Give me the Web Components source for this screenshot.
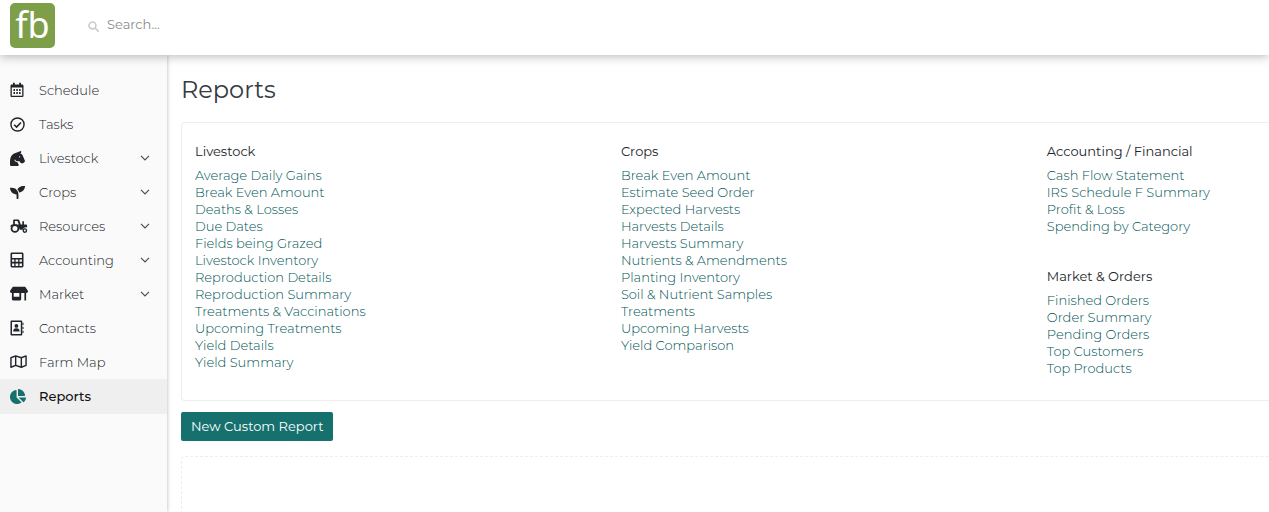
<!DOCTYPE html>
<html lang="en">
<head>
<meta charset="utf-8">
<title>Reports</title>
<style>
  body {
    margin: 0;
    color: #343a40;
    background: #fff;
    font: 13px/17px Montserrat, Inter, "Open Sans", sans-serif;
  }
</style>
</head>
<body>
<farm-app></farm-app>

<script>
/*
 * Icon paths, keyed by name: [viewBox, markup]
 */
const ICONS = {
  search: ["0 0 16 16", `<g fill="none" stroke="currentColor" stroke-width="2.4"><circle cx="6.5" cy="6.5" r="5"/><path d="M10.2 10.2l4.6 4.6" stroke-linecap="round"/></g>`],
  calendar: ["0 0 14 16", `<path fill-rule="evenodd" d="M3 .8h1.800V2.500h4.400V.8H11v1.700h1.200c.8 0 1.300.6 1.300 1.300v10c0 .8-.5 1.300-1.300 1.300H1.800c-.8 0-1.300-.5-1.300-1.300v-10c0-.7.5-1.300 1.300-1.300H3zM1.800 5.500v8.300h10.400V5.500z"/><path d="M3.500 7h1.500v2H3.500zm2.800 0h1.500v2H6.300zm2.800 0h1.500v2H9.100zM3.500 10h1.500v2H3.500zm2.800 0h1.500v2H6.300zm2.800 0h1.500v2H9.100z"/>`],
  tasks: ["0 0 16 16", `<g fill="none" stroke="currentColor" stroke-width="1.5"><circle cx="8" cy="8" r="7"/><path d="M4.500 8.300l2.500 2.500 4.700-4.900" stroke-width="1.700"/></g>`],
  horse: ["0 0 512 512", `<path d="M509.8 332.5l-69.9-164.300c-14.900-41.200-50.400-71-93-79.200 18-10.600 46.300-35.900 34.200-82.300-1.300-5-7.100-7.900-12-6.100L166.900 76.300C35.900 123.400 0 238.900 0 398.800V480c0 17.700 14.300 32 32 32h236.200c23.800 0 39.300-25 28.600-46.300L256 384v-.7c-45.600-3.500-84.600-30.700-104.300-69.600-1.600-3.100-.9-6.900 1.600-9.300l12.100-12.100c3.900-3.900 10.600-2.700 12.900 2.400 14.800 33.700 48.200 57.400 87.400 57.400 17.200 0 33-5.100 46.800-13.200l46 63.900c6 8.400 15.700 13.300 26 13.300h50.300c8.500 0 16.600-3.400 22.600-9.400l45.300-39.800c8.900-9.100 11.700-22.600 7.100-34.400zM328 224c-13.300 0-24-10.700-24-24s10.700-24 24-24 24 10.700 24 24-10.700 24-24 24z"/>`],
  seedling: ["0 0 512 512", `<path d="M64 96H0c0 123.700 100.300 224 224 224v144c0 8.800 7.200 16 16 16h32c8.800 0 16-7.200 16-16V320C288 196.300 187.700 96 64 96zm384-64c-84.200 0-157.400 46.500-195.700 115.200 27.700 30.200 48.200 66.900 59 107.600C424 243.100 512 147.900 512 32h-64z"/>`],
  tractor: ["0 0 20 16", `<path fill-rule="evenodd" d="M3.500 1.500c0-.6.4-1 1-1h4.700c.5 0 .8.300 1 .7L12 6h1.700V2.500h1.800V6h2.300c.7 0 1.200.5 1.200 1.200v2.300c-2-.8-4.300.2-4.900 2.500h-3.300l-1.300-3.500-3-1.700-3.800.7L.5 9V7.500L2 6h1.500zm1.900.8V6h4.500L8.300 2.300z"/><circle cx="5.500" cy="10.500" r="3.800" fill="none" stroke="currentColor" stroke-width="2"/><circle cx="16.500" cy="12.800" r="1.900" fill="none" stroke="currentColor" stroke-width="1.500"/>`],
  calculator: ["0 0 14 16", `<path fill-rule="evenodd" d="M1.900.5h10.200c.8 0 1.400.6 1.400 1.400v12.200c0 .8-.6 1.400-1.400 1.400H1.900c-.8 0-1.400-.6-1.400-1.400V1.900C.5 1.100 1.100.5 1.900.5zM2.100 2v4h9.800V2zm0 5.600v2.200h2.200V7.600zm3.500 0v2.200h2.600V7.600zm3.900 0v2.200h2.400V7.600zm-7.400 3.800v2.500h2.200v-2.500zm3.500 0v2.500h2.600v-2.500zm3.900 0v2.500h2.400v-2.500z"/>`],
  store: ["0 0 19 16", `<path d="M3 .7h13l2.700 4.100c.8 1.300-.2 2.500-1.500 2.500H1.800C.5 7.300-.5 6.100.3 4.800z"/><path fill-rule="evenodd" d="M2 7h1.900v4.400h6V7h1.900v7c0 .7-.5 1.200-1.200 1.200H3.200c-.7 0-1.200-.5-1.200-1.200zM15.200 7H17v8.200h-1.800z"/>`],
  contacts: ["0 0 14 16", `<path fill-rule="evenodd" d="M1.800.5H11c.8 0 1.300.5 1.300 1.300v12.400c0 .8-.5 1.300-1.300 1.300H1.800c-.8 0-1.300-.5-1.300-1.300V1.800C.5 1 1 .5 1.800.5zM2 2v12h8.800V2z"/><circle cx="6.400" cy="5.900" r="1.900"/><path d="M3.200 11.500c0-2 1-3.200 3.200-3.200s3.200 1.200 3.200 3.200zM12.500 2.800h1v2.300h-1zm0 4h1v2.300h-1zm0 4h1v2.300h-1z"/>`],
  map: ["0 0 18 16", `<path d="M1 4l5-2 6 2 5-2v10l-5 2-6-2-5 2zM6 2v10M12 4v10" fill="none" stroke="currentColor" stroke-width="1.500" stroke-linejoin="round"/>`],
  chart: ["0 0 544 512", `<path d="M527.800 288H290.500l158 158c6 6 16 6.500 22.200.7 38.700-36.500 65.300-85.600 73.100-140.900 1.400-9.400-6.500-17.800-16-17.800zm-15.800-64.800C503.700 103.700 408.300 8.300 288.800 0 279.700-.6 272 7.100 272 16.200V240h223.800c9.100 0 16.800-7.700 16.200-16.800zM224 288V50.700c0-9.500-8.400-17.400-17.800-16C87 51.500-4.100 155.600.1 280.400 4.500 408.500 114.800 513.600 243 512c50.400-.6 97-16.900 135.300-44 7.900-5.600 8.400-17.200 1.600-24.100z"/>`],
  chevron: ["0 0 10 6", `<path d="M1 .8l4 4 4-4" fill="none" stroke="currentColor" stroke-width="1.200"/>`]
};

const NAV = [
  ["calendar", "Schedule", 14],
  ["tasks", "Tasks", 15],
  ["horse", "Livestock", 15, true],
  ["seedling", "Crops", 15, true],
  ["tractor", "Resources", 18, true],
  ["calculator", "Accounting", 14, true],
  ["store", "Market", 18, true],
  ["contacts", "Contacts", 14],
  ["map", "Farm Map", 17],
  ["chart", "Reports", 16]
];

const COLUMNS = [
  {
    "Livestock": ["Average Daily Gains", "Break Even Amount", "Deaths & Losses", "Due Dates", "Fields being Grazed", "Livestock Inventory", "Reproduction Details", "Reproduction Summary", "Treatments & Vaccinations", "Upcoming Treatments", "Yield Details", "Yield Summary"]
  },
  {
    "Crops": ["Break Even Amount", "Estimate Seed Order", "Expected Harvests", "Harvests Details", "Harvests Summary", "Nutrients & Amendments", "Planting Inventory", "Soil & Nutrient Samples", "Treatments", "Upcoming Harvests", "Yield Comparison"]
  },
  {
    "Accounting / Financial": ["Cash Flow Statement", "IRS Schedule F Summary", "Profit & Loss", "Spending by Category"],
    "Market & Orders": ["Finished Orders", "Order Summary", "Pending Orders", "Top Customers", "Top Products"]
  }
];

const escape = (text) => text.replace(/&/g, "&amp;");

// Base class: renders this.template into an open shadow root
class FarmElement extends HTMLElement {
  connectedCallback() {
    if (this.shadowRoot) return;
    const t = document.createElement("template");
    t.innerHTML = this.template;
    this.attachShadow({ mode: "open" });
    this.shadowRoot.appendChild(t.content.cloneNode(true));
  }
}

class FarmIcon extends FarmElement {
  get template() {
    const [box, markup] = ICONS[this.getAttribute("name")];
    return `
    <style>
      :host { display: block; flex: none; }
      svg { display: block; width: ${this.getAttribute("size")}px; fill: currentColor; }
    </style>
    <svg viewBox="${box}" aria-hidden="true">${markup}</svg>
    `;
  }
}
customElements.define("farm-icon", FarmIcon);

class FarmHeader extends FarmElement {
  get template() {
    return `
    <style>
      :host {
        display: flex;
        align-items: flex-start;
        box-sizing: border-box;
        height: 55px;
        padding: 3px 10px;
        background: #fff;
        box-shadow: 0 1px 10px rgba(0, 0, 0, .3);
        position: relative;
        z-index: 2;
      }
      .logo {
        width: 45px;
        height: 45px;
        border-radius: 5px;
        background: #7d9f4a;
        color: #fff;
        font: 36px/43px "Noto Sans", "Open Sans", sans-serif;
        text-align: center;
        text-decoration: none;
      }
      label {
        display: flex;
        flex: 1;
        align-items: center;
        gap: 8px;
        height: 43px;
        margin-left: 33px;
        color: #ccc;
      }
      farm-icon { margin-top: 4px; }
      input {
        flex: 1;
        padding: 0;
        border: 0;
        outline: 0;
        background: none;
        font: inherit;
        color: #343a40;
      }
      input::placeholder { color: #8c8c8c; opacity: 1; }
    </style>
    <a class="logo" href="#">fb</a>
    <label>
      <farm-icon name="search" size="11"></farm-icon>
      <input type="text" placeholder="Search..." aria-label="Search">
    </label>
    `;
  }
}
customElements.define("farm-header", FarmHeader);

class NavItem extends FarmElement {
  get template() {
    return `
    <style>
      :host { display: block; }
      a {
        display: flex;
        align-items: center;
        height: 34px;
        padding: 0 17px 0 10px;
        color: #16191c;
        font-weight: 300;
        text-decoration: none;
      }
      .icon { width: 29px; color: #212529; }
      .text { flex: 1; }
      .arrow { color: #4b4b63; }
      :host([active]) a { height: 35px; background: #efefef; color: #111; font-weight: 500; }
      :host([active]) .icon { color: #15706e; }
    </style>
    <a href="#">
      <span class="icon"><farm-icon name="${this.getAttribute("icon")}" size="${this.getAttribute("size")}"></farm-icon></span>
      <span class="text"><slot></slot></span>
      ${this.hasAttribute("expandable") ? `<farm-icon class="arrow" name="chevron" size="10"></farm-icon>` : ""}
    </a>
    `;
  }
}
customElements.define("nav-item", NavItem);

class FarmSidebar extends FarmElement {
  get template() {
    const items = NAV.map(([icon, label, size, expandable]) => `
      <nav-item icon="${icon}" size="${size}" ${expandable ? "expandable" : ""} ${label === "Reports" ? "active" : ""}>${label}</nav-item>`);
    return `
    <style>
      :host {
        display: block;
        flex: 0 0 167px;
        padding-top: 18px;
        background: #fafafa;
        box-shadow: 0 0 4px rgba(0, 0, 0, .3);
      }
    </style>
    <nav>${items.join("")}</nav>
    `;
  }
}
customElements.define("farm-sidebar", FarmSidebar);

class ReportGroup extends FarmElement {
  get template() {
    return `
    <style>
      :host { display: block; }
      h2 { margin: 0 0 7px; color: #212529; font: inherit; }
      ul { margin: 0; padding: 0; list-style: none; }
      ::slotted(li) { display: block; }
    </style>
    <h2>${escape(this.getAttribute("heading"))}</h2>
    <ul><slot></slot></ul>
    `;
  }
}
customElements.define("report-group", ReportGroup);

class ReportsPage extends FarmElement {
  get template() {
    const group = ([heading, links]) => `
      <report-group heading="${escape(heading)}">
        ${links.map((link) => `<li><a href="#">${escape(link)}</a></li>`).join("")}
      </report-group>`;
    const columns = COLUMNS.map((column) => `
      <div class="column">${Object.entries(column).map(group).join("")}</div>`);
    return `
    <style>
      :host {
        display: flex;
        flex: 1;
        flex-direction: column;
        align-items: stretch;
        min-width: 0;
        padding: 19px 0 0 14px;
      }
      h1 { margin: 0 0 16px; font-size: 24px; line-height: 32px; font-weight: 400; }
      .card {
        display: grid;
        grid-template-columns: 23fr 23fr 12fr;
        padding: 20px 0 23px 13px;
        border: 1px solid #eee;
        border-right: 0;
        border-radius: 4px 0 0 4px;
      }
      .column { display: flex; flex-direction: column; gap: 33px; white-space: nowrap; }
      a { color: #005556; font-weight: 300; text-decoration: none; }
      button {
        align-self: flex-start;
        margin: 11px 0 15px;
        padding: 6px 10px;
        border: 0;
        border-radius: 2px;
        background: #15706e;
        color: #fff;
        font: inherit;
      }
      .dropzone {
        flex: 1;
        border: 1px dashed #eee;
        border-width: 1px 0 0 1px;
        border-radius: 4px 0 0 0;
      }
    </style>
    <h1>Reports</h1>
    <section class="card">${columns.join("")}</section>
    <button type="button">New Custom Report</button>
    <div class="dropzone"></div>
    `;
  }
}
customElements.define("reports-page", ReportsPage);

class FarmApp extends FarmElement {
  get template() {
    return `
    <style>
      :host { display: flex; flex-direction: column; min-height: 100vh; }
      .body { display: flex; flex: 1; }
    </style>
    <farm-header></farm-header>
    <div class="body">
      <farm-sidebar></farm-sidebar>
      <reports-page></reports-page>
    </div>
    `;
  }
}
customElements.define("farm-app", FarmApp);
</script>
</body>
</html>
